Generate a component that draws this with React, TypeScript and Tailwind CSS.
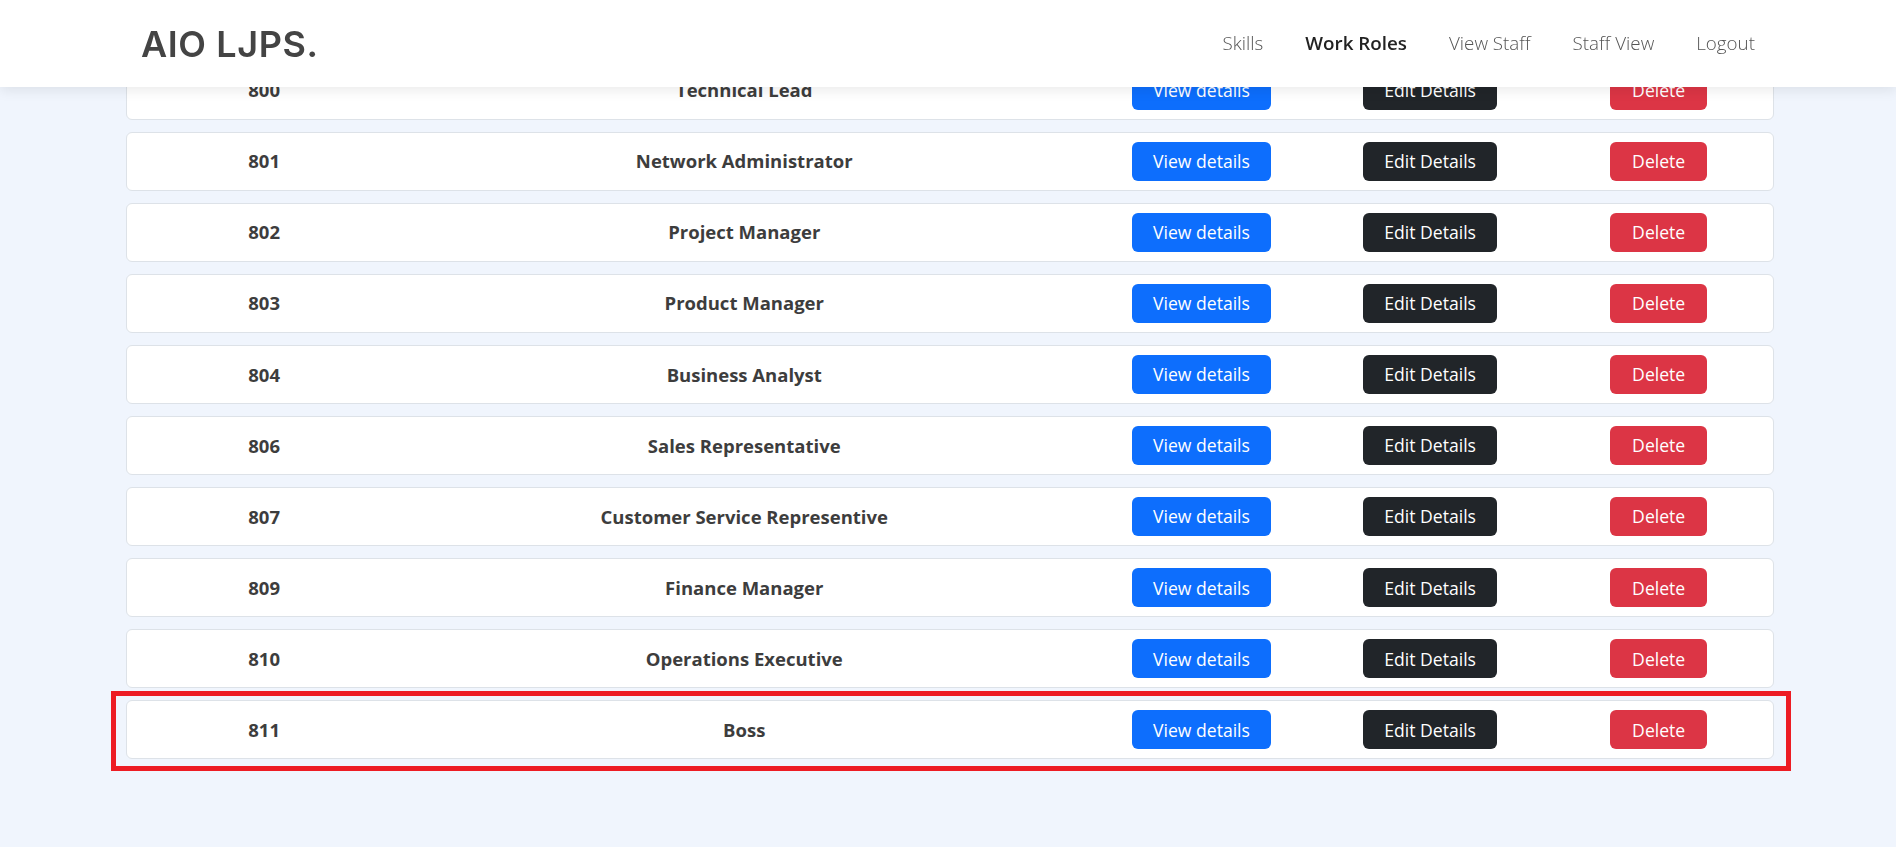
import React from "react";

const ROLES = [
  { id: 800, name: "Technical Lead" },
  { id: 801, name: "Network Administrator" },
  { id: 802, name: "Project Manager" },
  { id: 803, name: "Product Manager" },
  { id: 804, name: "Business Analyst" },
  { id: 806, name: "Sales Representative" },
  { id: 807, name: "Customer Service Representive" },
  { id: 809, name: "Finance Manager" },
  { id: 810, name: "Operations Executive" },
  { id: 811, name: "Boss" },
];

const NAV = [
  { label: "Skills", active: false },
  { label: "Work Roles", active: true },
  { label: "View Staff", active: false },
  { label: "Staff View", active: false },
  { label: "Logout", active: false },
];

function RoleRow({ id, name, highlight }: { id: number; name: string; highlight?: boolean }) {
  return (
    <div className="relative grid h-[59.1px] grid-cols-[6fr_15fr_5fr_5fr_5fr] items-center rounded-md border border-[#dde2e8] bg-white">
      <div className="text-center text-[18.5px] font-bold text-[#3d3d3d]">{id}</div>
      <div className="text-center text-[18.5px] font-bold text-[#3d3d3d]">{name}</div>
      <div className="flex justify-center">
        <button className="h-[39px] rounded-md bg-[#0d6efd] px-[21px] text-[17.6px] text-white">View details</button>
      </div>
      <div className="flex justify-center">
        <button className="h-[39px] rounded-md bg-[#212529] px-[21px] text-[17.6px] text-white">Edit Details</button>
      </div>
      <div className="flex justify-center">
        <button className="h-[39px] rounded-md bg-[#dc3545] px-[22px] text-[17.6px] text-white">Delete</button>
      </div>
      {/* annotation box */}
      {highlight && (
        <div className="pointer-events-none absolute -top-[10px] -bottom-[13px] -left-[16px] -right-[18px] border-[5px] border-[#ed1c24]" />
      )}
    </div>
  );
}

export default function App() {
  return (
    <div className="min-h-[847px] bg-[#f0f5fd] font-['Open_Sans',sans-serif]">
      {/* Top bar */}
      <header className="fixed inset-x-0 top-0 z-10 flex h-[87px] items-center justify-between bg-white pl-[141px] pr-[120px] shadow-[0_4px_12px_rgba(0,0,0,0.08)]">
        <span className="font-['Inter',sans-serif] text-[36px] font-semibold tracking-[0.6px] text-[#444]">AIO LJPS.</span>
        <nav className="flex items-center">
          {NAV.map((n) => (
            <a
              key={n.label}
              className={`px-[21px] text-[18.8px] ${
                n.active ? "font-semibold text-[#222]" : "font-light text-[#555]"
              }`}
            >
              {n.label}
            </a>
          ))}
        </nav>
      </header>

      {/* Work roles list */}
      <main className="ml-[126px] flex w-[1648px] flex-col gap-[12px] pt-[60.5px]">
        {ROLES.map((r, i) => (
          <RoleRow key={r.id} id={r.id} name={r.name} highlight={i === ROLES.length - 1} />
        ))}
      </main>
    </div>
  );
}
